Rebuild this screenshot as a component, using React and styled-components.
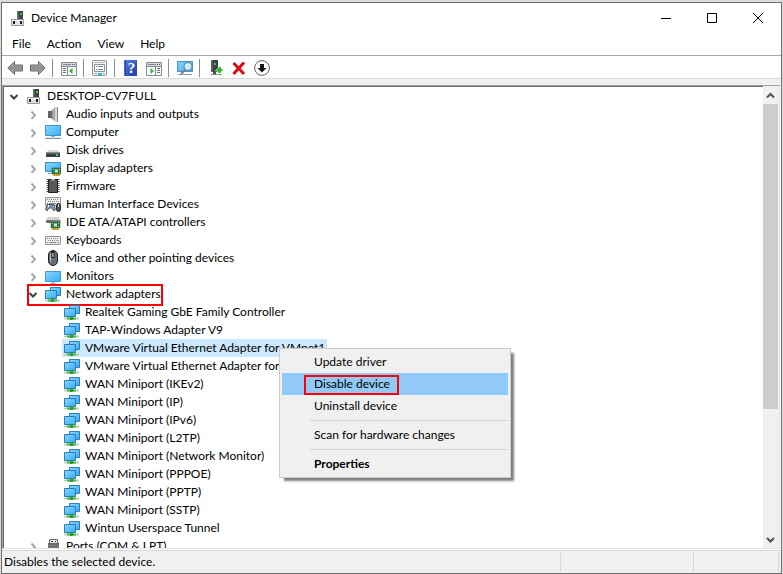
import React, { useState } from "react";
import styled, { createGlobalStyle, css } from "styled-components";

const GlobalStyle = createGlobalStyle`
  *,
  *::before,
  *::after {
    box-sizing: border-box;
  }
  body {
    margin: 0;
    background: #dcdcdc;
  }
  button {
    margin: 0;
    padding: 0;
    border: none;
    background: none;
    color: inherit;
    font: inherit;
  }
  ul {
    margin: 0;
    padding: 0;
    list-style: none;
  }
`;

const Desktop = styled.div`
  height: 100vh;
  padding: 2px 1px 0;
  background: #dcdcdc;
  font-family: Lato, "Open Sans", sans-serif;
  font-size: 12px;
  line-height: 18px;
  color: #000;
`;

const Window = styled.div`
  height: 100%;
  display: flex;
  flex-direction: column;
  border: 1px solid #6e6e6e;
  background: #f0f0f0;
`;

const TitleBar = styled.header`
  display: flex;
  align-items: center;
  height: 30px;
  padding-left: 8px;
  background: #fff;
  & > h1 {
    flex: 1;
    margin: 0 0 0 5px;
    font-size: 12px;
    font-weight: 400;
  }
`;

const CaptionButton = styled.button`
  width: 46px;
  height: 30px;
  display: flex;
  align-items: center;
  justify-content: center;
  &:hover {
    background: #e5e5e5;
  }
`;

const MenuBar = styled.nav`
  display: flex;
  align-items: center;
  gap: 16px;
  height: 23px;
  padding-left: 10px;
  background: #fff;
  border-bottom: 1px solid #a9a9a9;
`;

const ToolBar = styled.div`
  display: flex;
  align-items: center;
  height: 23px;
  padding: 2px 0 0 2px;
  background: #fff;
  border-bottom: 1px solid #d9d9d9;
`;

const ToolButton = styled.button`
  width: 23px;
  height: 20px;
  display: flex;
  align-items: center;
  padding-left: 3px;
`;

const ToolDivider = styled.span`
  width: 1px;
  height: 18px;
  margin: 0 5px 0 2px;
  background: #8d8d8d;
`;

const TreePane = styled.main`
  flex: 1;
  min-height: 0;
  display: flex;
  margin: 6px 1px 1px 0;
  background: #fff;
  border: 1px solid #e3e3e3;
  border-top-color: #a0a0a0;
  border-left-color: #a0a0a0;
  box-shadow: 1px 1px 0 #fff;
`;

const TreeView = styled.div`
  flex: 1;
  min-width: 0;
  overflow: hidden;
  border-top: 1px solid #696969;
  border-left: 1px solid #696969;
`;

const Branch = styled.ul`
  padding-left: ${(p) => (p.$nested ? 19 : 0)}px;
`;

const Row = styled.div`
  position: relative;
  display: flex;
  align-items: center;
  width: max-content;
  height: 18px;
  ${(p) =>
    p.$marked &&
    css`
      &::after {
        content: "";
        position: absolute;
        inset: -1px 0 -3px 4px;
        border: 2px solid #f00;
        pointer-events: none;
      }
    `}
`;

const Expander = styled.button`
  width: 20px;
  height: 18px;
  display: flex;
  align-items: center;
  justify-content: center;
`;

const Spacer = styled.span`
  width: 20px;
`;

const Label = styled.button`
  display: flex;
  align-items: center;
  gap: 5px;
  height: 18px;
  padding: 0 2px;
  white-space: nowrap;
  background: ${(p) => (p.$selected ? "#cce8ff" : "transparent")};
`;

const ScrollBar = styled.div`
  width: 16px;
  display: flex;
  flex-direction: column;
  padding-top: 1px;
  background: #f0f0f0;
  border-right: 1px solid #f0f0f0;
`;

const ScrollButton = styled.button`
  height: 17px;
  display: flex;
  align-items: center;
  justify-content: center;
`;

const ScrollTrack = styled.div`
  flex: 1;
  display: flex;
  flex-direction: column;
  &::before {
    content: "";
    flex: 5;
    background: #cdcdcd;
  }
  &::after {
    content: "";
    flex: 2;
  }
`;

const ContextMenu = styled.div`
  position: absolute;
  z-index: 2;
  top: 9px;
  left: 237px;
  width: 232px;
  padding: 2px;
  background: #f0f0f0;
  border: 1px solid #ccc;
  box-shadow: 4px 4px 2px -1px rgba(0, 0, 0, 0.5);
`;

const MenuItem = styled.button`
  position: relative;
  display: block;
  width: 100%;
  height: 22px;
  padding-left: 32px;
  text-align: left;
  font-weight: ${(p) => (p.$bold ? 700 : 400)};
  background: ${(p) => (p.$active ? "#91c9f7" : "transparent")};
  ${(p) =>
    p.$active &&
    css`
      &::after {
        content: "";
        position: absolute;
        top: 2px;
        left: 22px;
        width: 95px;
        height: 20px;
        border: 2px solid #f00;
      }
    `}
`;

const MenuDivider = styled.hr`
  margin: 3px 0 3px 28px;
  border: none;
  border-top: 1px solid #d4d4d4;
`;

const StatusBar = styled.footer`
  display: flex;
  height: 23px;
  padding: 1px 2px 1px 0;
  border-top: 1px solid #d7d7d7;
  background: #f0f0f0;
`;

const StatusCell = styled.div`
  flex: ${(p) => (p.$width ? `0 0 ${p.$width}px` : "1")};
  padding: 1px 2px;
  border-right: 1px solid #d7d7d7;
`;

const HiddenSvg = styled.svg`
  position: absolute;
`;

const Svg = ({ size = 16, children }) => (
  <svg width={size} height={size} viewBox={`0 0 ${size} ${size}`} aria-hidden="true">
    {children}
  </svg>
);

const Gradients = () => (
  <HiddenSvg width="0" height="0" aria-hidden="true">
    <defs>
      <linearGradient id="screen" x1="0" y1="0" x2="1" y2="1">
        <stop offset="0" stopColor="#8ad6fd" />
        <stop offset="0.5" stopColor="#5fc2fa" />
        <stop offset="1" stopColor="#3aaaf2" />
      </linearGradient>
      <linearGradient id="grey" x1="0" y1="0" x2="0" y2="1">
        <stop offset="0" stopColor="#b5b5b5" />
        <stop offset="0.5" stopColor="#8e8e8e" />
        <stop offset="1" stopColor="#b0b0b0" />
      </linearGradient>
      <linearGradient id="book" x1="0" y1="0" x2="1" y2="1">
        <stop offset="0" stopColor="#5b7fe0" />
        <stop offset="1" stopColor="#1f3da8" />
      </linearGradient>
      <linearGradient id="cone" x1="0" y1="0" x2="1" y2="0">
        <stop offset="0" stopColor="#5b5f63" />
        <stop offset="0.5" stopColor="#b0b4b7" />
        <stop offset="1" stopColor="#7c8083" />
      </linearGradient>
    </defs>
  </HiddenSvg>
);

const RootIcon = () => (
  <Svg>
    <path d="M7 1h6v8H7z" fill="#3f4446" />
    <path d="M7 1h1.5v8H7z" fill="#6d7274" />
    <path d="M10 3h2v2h-2z" fill="#35d23f" />
    <path d="M1.500 9.500h12v6h-12z" fill="#e2e2e2" stroke="#9a9a9a" />
    <path d="M2 10.500h11" stroke="#f6f6f6" />
    <path d="M3 11h2v3H3zM10 11h2v3h-2z" fill="#1c1c1c" />
  </Svg>
);

const AudioIcon = () => (
  <Svg>
    <path d="M3 5h3v7H3z" fill="#5f6467" />
    <path d="M6 5l5-4.500v15.500L6 12z" fill="url(#cone)" />
    <path d="M10 1h2v15h-2z" fill="#d5d8d9" />
    <path d="M12.500 1v15" stroke="#85898c" />
  </Svg>
);

const ComputerIcon = () => (
  <Svg>
    <path d="M.5 1.500h15v10H.5z" fill="url(#screen)" stroke="#3d8fc4" />
    <path d="M6 12h4v1H6z" fill="#9fb3c0" />
    <path d="M0 14.500h16" stroke="#6f98b5" />
    <path d="M1 13.500h14" stroke="#dbe7ef" />
  </Svg>
);

const MonitorIcon = () => (
  <Svg>
    <path d="M.5 3.500h15v10H.5z" fill="url(#screen)" stroke="#3d9bd4" />
    <path d="M5 15.500h6" stroke="#9fb3c0" />
    <path d="M7 14h2v1H7z" fill="#8fa5b3" />
  </Svg>
);

const DiskIcon = () => (
  <Svg>
    <path d="M3.500 8h9.500l2 3H1z" fill="#dadada" />
    <path d="M1 10.500h14v4.500H1z" fill="#3c4043" />
    <path d="M1 11h14" stroke="#85898c" />
    <path d="M11 12h2v2h-2z" fill="#3bd845" />
  </Svg>
);

const BoardShape = ({ x, y }) => (
  <g transform={`translate(${x} ${y})`}>
    <path d="M0 0h9v6H0z" fill="#2e7d43" stroke="#1c5a2c" strokeWidth="0.500" />
    <path d="M3 1.500h3v3H3z" fill="#cfe3d2" />
    <path d="M1 1h1v1H1zM7 1h1v1H7zM7 4h1v1H7z" fill="#9fd3aa" />
    <path d="M1 6h7v2H1z" fill="#e0a93a" />
    <path d="M2.500 6v2M4.500 6v2M6.500 6v2" stroke="#a9721d" strokeWidth="0.500" />
  </g>
);

const DisplayIcon = () => (
  <Svg>
    <path d="M.5 2.500h15v9H.5z" fill="url(#screen)" stroke="#3d8fc4" />
    <path d="M3 13.500h4" stroke="#6f98b5" />
    <BoardShape x={7} y={8} />
  </Svg>
);

const FirmwareIcon = () => (
  <Svg>
    <path d="M1.500 1.500h13M1.500 3.500h13M1.500 5.500h13M1.500 7.500h13M1.500 9.500h13M1.500 11.500h13M1.500 13.500h13" stroke="#4a4a4a" />
    <path d="M3.500 1.500h9v13h-9z" fill="#55585a" stroke="#1d1f20" />
    <path d="M6.500 1h3v1.500h-3z" fill="#c4c4c4" />
  </Svg>
);

const KeyboardShape = ({ y }) => (
  <g transform={`translate(0 ${y})`}>
    <path d="M.5.500h15v8H.5z" fill="#ececec" stroke="#94989b" />
    <path d="M2 2.500h12" stroke="#85898c" strokeDasharray="1 1" />
    <path d="M3 4.500h11" stroke="#85898c" strokeDasharray="1 1" />
    <path d="M2 6.500h1M4 6.500h7M12 6.500h2" stroke="#85898c" />
  </g>
);

const HidIcon = () => (
  <Svg>
    <KeyboardShape y={1} />
    <path d="M2 8.500h7l1.500 5-1.500 1.500-2-3H4l-2 3-1.500-1.500z" fill="#8797a8" stroke="#4c5965" />
    <path d="M3 9h1v2H3z" fill="#fff" />
    <path d="M7 9h1v2H7z" fill="#3ea0e8" />
    <rect x="11.500" y="7.500" width="4" height="8" rx="2" fill="#4d545a" stroke="#23282c" />
    <path d="M13.500 8v3" stroke="#c9ced2" />
  </Svg>
);

const IdeIcon = () => (
  <Svg>
    <path d="M3 3h11l1.500 3H1z" fill="#d3d3d3" />
    <path d="M1 6h14.500v3H1z" fill="#7d8183" />
    <path d="M2 7.500h4" stroke="#4c5052" />
    <BoardShape x={6} y={8} />
  </Svg>
);

const KeyboardIcon = () => (
  <Svg>
    <KeyboardShape y={4} />
  </Svg>
);

const MouseIcon = () => (
  <Svg>
    <rect x="3.500" y=".5" width="9" height="15" rx="4.500" fill="#6a6f73" stroke="#1f2325" />
    <path d="M5.500 3.500v8" stroke="#b9bec2" />
    <path d="M8 1v7" stroke="#1f2325" strokeWidth="3" />
    <path d="M7.500 3h1v4h-1z" fill="#eef1f3" />
  </Svg>
);

const NetworkIcon = () => (
  <Svg>
    <path d="M5.500 1.500h10v8h-10z" fill="url(#screen)" stroke="#2c7db8" />
    <path d="M.5 4.500h11v8H.5z" fill="url(#screen)" stroke="#2c7db8" />
    <path d="M0 14.500h15" stroke="#b4d4b1" strokeWidth="2" />
    <path d="M3 14.500h9" stroke="#45b449" strokeWidth="2" />
    <path d="M6 12.500h3V16H6z" fill="#2f9a37" />
  </Svg>
);

const PortIcon = () => (
  <Svg>
    <path d="M4.500 1.500h8v4h-8z" fill="#e4e4e4" stroke="#6c6c6c" />
    <path d="M6 3h2v1H6zM10 3h1v1h-1z" fill="#333" />
    <path d="M3 5h11v10H3z" fill="#66696b" />
    <path d="M3 7.500h11M3 9.500h11" stroke="#7c7f81" />
  </Svg>
);

const ArrowIcon = ({ right }) => (
  <Svg>
    <path
      transform={right ? "matrix(-1 0 0 1 16 0)" : undefined}
      d="M.8 8L7.500 1.500V5h8v6h-8v3.500z"
      fill="url(#grey)"
      stroke="#6a6a6a"
    />
  </Svg>
);

const PaneIcon = ({ right }) => (
  <Svg>
    <path d="M.5 2.500h15v13H.5z" fill="#fafafa" stroke="#858b91" />
    <path d="M1 3h14v3H1z" fill="#d5dbe1" />
    <path d="M2 4.500h8" stroke="#7d868f" />
    <path d="M11 4.500h4" stroke="#4c545c" strokeDasharray="1 1" />
    <path d="M1 6.500h14" stroke="#858b91" />
    <g transform={right ? "matrix(-1 0 0 1 16 0)" : undefined}>
      <path d="M6.500 7v8" stroke="#858b91" />
      <path d="M2 8.500h3M2 10.500h3M2 12.500h3" stroke="#5f7287" />
      <path d="M11.500 8v6L8 11z" fill="#3fae29" />
    </g>
  </Svg>
);

const PropertiesIcon = () => (
  <Svg>
    <rect x=".5" y=".5" width="14" height="15" rx="1" fill="#f3f4f5" stroke="#8c9196" />
    <path d="M2 2.500h11" stroke="#b2b8be" />
    <path d="M2.500 4.500h10v7h-10z" fill="#fff" stroke="#8c9196" />
    <path d="M4 6.500h1M4 9.500h1" stroke="#2f80c8" />
    <path d="M6 6.500h5M6 9.500h5" stroke="#7d858c" />
    <path d="M2 13.500h3M11 13.500h2" stroke="#a9afb5" />
    <path d="M6 14h4" stroke="#20c0ee" strokeWidth="2" />
  </Svg>
);

const HelpIcon = () => (
  <Svg>
    <path d="M1 0h13v16H1z" fill="url(#book)" />
    <path d="M1 0h2v16H1z" fill="#2943a6" />
    <path d="M1.500 0v16" stroke="#7b93e2" strokeDasharray="1 1" />
    <text x="8.500" y="13" textAnchor="middle" fontFamily="Liberation Serif, serif" fontSize="15" fontWeight="700" fill="#fff">
      ?
    </text>
  </Svg>
);

const ScanIcon = () => (
  <Svg>
    <path d="M.5 1.500h15v10H.5z" fill="url(#screen)" stroke="#4a93c2" />
    <path d="M1 14.500h14" stroke="#7f9db3" />
    <path d="M8.500 9.500L4 14" stroke="#7c8186" strokeWidth="2" />
    <circle cx="11" cy="6.500" r="4" fill="#c8eafc" stroke="#5f8299" />
    <path d="M9 6a2 2 0 0 1 2-2" stroke="#fff" fill="none" />
  </Svg>
);

const EnableIcon = () => (
  <Svg>
    <path d="M3 0h7v12H3z" fill="#3d4144" />
    <path d="M3 0h2v12H3z" fill="#5d6265" />
    <path d="M6 3h2v2H6z" fill="#35d23f" />
    <path d="M3 14.500h6" stroke="#7c7c7c" />
    <path d="M5 12h3v2H5z" fill="#4e4e4e" />
    <path d="M11.500 6l4.200 5h-2.200v2h-4v-2H7.300z" fill="#2fb52f" stroke="#fff" strokeWidth="0.500" />
    <path d="M9.500 14.500h4" stroke="#2fb52f" />
  </Svg>
);

const RemoveIcon = () => (
  <Svg>
    <path d="M2.500 3l10.500 11M13 2.500L2.500 14" stroke="#dc0a14" strokeWidth="3" />
  </Svg>
);

const DownIcon = () => (
  <Svg>
    <circle cx="8" cy="8" r="7.400" fill="#fff" stroke="#5c5c5c" />
    <path d="M6 4h4v4h2.500L8 12.500 3.500 8H6z" fill="#151515" />
  </Svg>
);

const Chevron = ({ open }) => (
  <Svg size={12}>
    {open ? (
      <path d="M2.500 5L6 8.500 9.500 5" fill="none" stroke="#404040" strokeWidth="2" />
    ) : (
      <path d="M4.500 3.500L8 7.200l-3.500 3.700" fill="none" stroke="#a6a6a6" strokeWidth="2" />
    )}
  </Svg>
);

const ScrollArrow = ({ down }) => (
  <Svg size={9}>
    <path d={down ? "M1 3l3.500 3.500L8 3" : "M1 6.500L4.500 3 8 6.500"} fill="none" stroke="#505050" strokeWidth="2" />
  </Svg>
);

const menus = ["File", "Action", "View", "Help"];

const tools = [
  [
    { name: "Back", icon: <ArrowIcon /> },
    { name: "Forward", icon: <ArrowIcon right /> },
  ],
  [{ name: "Show/Hide Console Tree", icon: <PaneIcon /> }],
  [{ name: "Properties", icon: <PropertiesIcon /> }],
  [
    { name: "Help", icon: <HelpIcon /> },
    { name: "Show/Hide Action Pane", icon: <PaneIcon right /> },
  ],
  [{ name: "Scan for hardware changes", icon: <ScanIcon /> }],
  [
    { name: "Update driver", icon: <EnableIcon /> },
    { name: "Uninstall device", icon: <RemoveIcon /> },
    { name: "Disable device", icon: <DownIcon /> },
  ],
];

const adapters = [
  "Realtek Gaming GbE Family Controller",
  "TAP-Windows Adapter V9",
  "VMware Virtual Ethernet Adapter for VMnet1",
  "VMware Virtual Ethernet Adapter for VMnet8",
  "WAN Miniport (IKEv2)",
  "WAN Miniport (IP)",
  "WAN Miniport (IPv6)",
  "WAN Miniport (L2TP)",
  "WAN Miniport (Network Monitor)",
  "WAN Miniport (PPPOE)",
  "WAN Miniport (PPTP)",
  "WAN Miniport (SSTP)",
  "Wintun Userspace Tunnel",
];

const categories = [
  { name: "Audio inputs and outputs", icon: <AudioIcon /> },
  { name: "Computer", icon: <ComputerIcon /> },
  { name: "Disk drives", icon: <DiskIcon /> },
  { name: "Display adapters", icon: <DisplayIcon /> },
  { name: "Firmware", icon: <FirmwareIcon /> },
  { name: "Human Interface Devices", icon: <HidIcon /> },
  { name: "IDE ATA/ATAPI controllers", icon: <IdeIcon /> },
  { name: "Keyboards", icon: <KeyboardIcon /> },
  { name: "Mice and other pointing devices", icon: <MouseIcon /> },
  { name: "Monitors", icon: <MonitorIcon /> },
  { name: "Network adapters", icon: <NetworkIcon />, devices: adapters, marked: true },
  { name: "Ports (COM & LPT)", icon: <PortIcon /> },
];

const DeviceMenu = () => (
  <ContextMenu role="menu">
    <MenuItem role="menuitem">Update driver</MenuItem>
    <MenuItem role="menuitem" $active>
      Disable device
    </MenuItem>
    <MenuItem role="menuitem">Uninstall device</MenuItem>
    <MenuDivider />
    <MenuItem role="menuitem">Scan for hardware changes</MenuItem>
    <MenuDivider />
    <MenuItem role="menuitem" $bold>
      Properties
    </MenuItem>
  </ContextMenu>
);

const Category = ({ name, icon, devices, marked }) => {
  const [open, setOpen] = useState(Boolean(devices));
  const [selected, setSelected] = useState("VMware Virtual Ethernet Adapter for VMnet1");
  return (
    <li>
      <Row $marked={marked}>
        <Expander aria-label={`Expand ${name}`} aria-expanded={open} onClick={() => setOpen(!open)}>
          <Chevron open={open} />
        </Expander>
        <Label>
          {icon}
          {name}
        </Label>
      </Row>
      {open && devices && (
        <Branch $nested>
          {devices.map((device) => (
            <li key={device}>
              <Row>
                <Spacer />
                <Label $selected={device === selected} onClick={() => setSelected(device)}>
                  <NetworkIcon />
                  {device}
                </Label>
                {device === selected && <DeviceMenu />}
              </Row>
            </li>
          ))}
        </Branch>
      )}
    </li>
  );
};

const App = () => {
  const [open, setOpen] = useState(true);
  return (
    <Desktop>
      <GlobalStyle />
      <Gradients />
      <Window>
        <TitleBar>
          <RootIcon />
          <h1>Device Manager</h1>
          <CaptionButton aria-label="Minimize">
            <Svg size={10}>
              <path d="M0 5.500h10" stroke="#000" />
            </Svg>
          </CaptionButton>
          <CaptionButton aria-label="Maximize">
            <Svg size={10}>
              <path d="M.5.500h9v9h-9z" fill="none" stroke="#000" />
            </Svg>
          </CaptionButton>
          <CaptionButton aria-label="Close">
            <Svg size={10}>
              <path d="M0 0l10 10M10 0L0 10" stroke="#000" />
            </Svg>
          </CaptionButton>
        </TitleBar>
        <MenuBar>
          {menus.map((menu) => (
            <button key={menu}>{menu}</button>
          ))}
        </MenuBar>
        <ToolBar>
          {tools.map((group, index) => (
            <React.Fragment key={index}>
              {index > 0 && <ToolDivider />}
              {group.map((tool) => (
                <ToolButton key={tool.name} aria-label={tool.name}>
                  {tool.icon}
                </ToolButton>
              ))}
            </React.Fragment>
          ))}
        </ToolBar>
        <TreePane>
          <TreeView>
            <Row>
              <Expander aria-label="Expand DESKTOP-CV7FULL" aria-expanded={open} onClick={() => setOpen(!open)}>
                <Chevron open={open} />
              </Expander>
              <Label>
                <RootIcon />
                DESKTOP-CV7FULL
              </Label>
            </Row>
            {open && (
              <Branch $nested>
                {categories.map((category) => (
                  <Category key={category.name} {...category} />
                ))}
              </Branch>
            )}
          </TreeView>
          <ScrollBar>
            <ScrollButton aria-label="Scroll up">
              <ScrollArrow />
            </ScrollButton>
            <ScrollTrack />
            <ScrollButton aria-label="Scroll down">
              <ScrollArrow down />
            </ScrollButton>
          </ScrollBar>
        </TreePane>
        <StatusBar>
          <StatusCell>Disables the selected device.</StatusCell>
          <StatusCell $width={133} />
          <StatusCell $width={85} />
        </StatusBar>
      </Window>
    </Desktop>
  );
};

export default App;
